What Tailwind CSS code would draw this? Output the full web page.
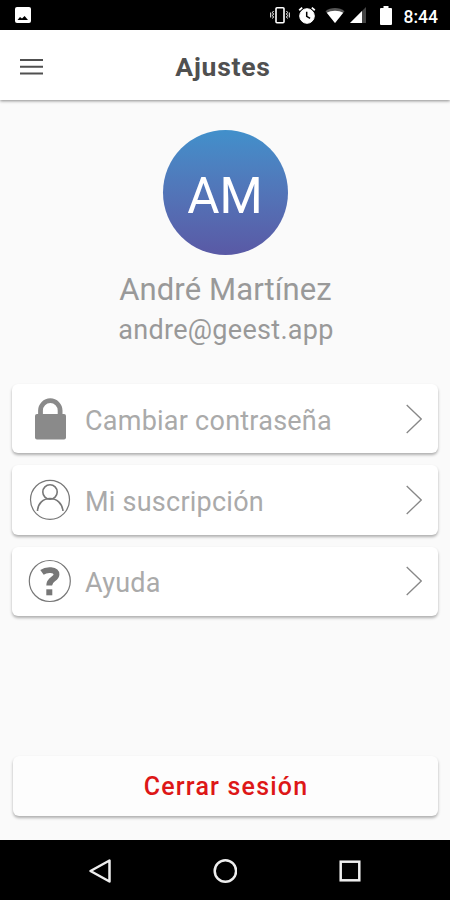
<!DOCTYPE html>
<html lang="es">
<head>
    <meta charset="UTF-8">
    <meta name="viewport" content="width=device-width, initial-scale=1.0">
    <title>Ajustes</title>
    <script src="https://cdn.jsdelivr.net/npm/@tailwindcss/browser@4"></script>
</head>
<body class="flex flex-col h-[900px] w-[450px] overflow-hidden bg-[#fafafa] font-[Roboto,sans-serif]">

    <!-- Status bar -->
    <div class="flex h-[30px] shrink-0 items-center justify-between bg-black pl-[14px] pr-[12px] text-white">
        <svg class="h-[18px] w-[18px]" viewBox="0 0 18 18">
            <rect x="1" y="1" width="16" height="16" rx="2" fill="#fff"/>
            <path d="M3.5 14l2.500-3 2 1.500 2.600-2.500 3.400 4z" fill="#000"/>
        </svg>
        <div class="flex items-center">
            <svg class="h-5 w-5" viewBox="0 0 20 20" fill="none" stroke="#fff">
                <rect x="6" y="2.7" width="8" height="15" rx="1" stroke-width="1.6"/>
                <path d="M3.5 6l-1 1.5 1 1.5-1 1.5 1 1.5-1 1.5M.7 7.5v5M16.5 6l1 1.5-1 1.5 1 1.5-1 1.5 1 1.5M19.3 7.5v5" stroke-width="1"/>
            </svg>
            <svg class="ml-2 h-[18px] w-[18px]" viewBox="0 0 18 18" fill="none" stroke="#fff">
                <circle cx="9" cy="10" r="7.3" fill="#fff" stroke-width="1"/>
                <path d="M1.2 4.2l3-2.6M16.8 4.2l-3-2.6" stroke-width="1.8"/>
                <path d="M8.7 5.7v4.7l3.4 2" stroke="#000" stroke-width="1.5"/>
            </svg>
            <svg class="ml-[9px] h-4 w-5" viewBox="0 0 20 16">
                <path d="M10 16L.5 4.2C5-.2 15-.2 19.500 4.200z" fill="#555"/>
                <path d="M10 16L1.800 5.800c4-2.800 12.400-2.800 16.400 0z" fill="#fff"/>
            </svg>
            <svg class="ml-[5px] h-4 w-4" viewBox="0 0 16 16">
                <path d="M0 16L16 0v16z" fill="#444"/>
                <path d="M0 16L12 4v12z" fill="#fff"/>
            </svg>
            <svg class="ml-[14px] h-[19px] w-3" viewBox="0 0 12 19" fill="#fff">
                <path d="M3.500 0h5v2H11a1 1 0 0 1 1 1v15a1 1 0 0 1-1 1H1a1 1 0 0 1-1-1V3a1 1 0 0 1 1-1h2.500z"/>
            </svg>
            <span class="ml-3 pt-[3px] text-[17.500px] leading-5 font-medium">8:44</span>
        </div>
    </div>

    <!-- App bar -->
    <header class="grid h-[70px] shrink-0 grid-cols-[1fr_auto_1fr] items-center bg-white px-5 pt-[3px] shadow-[0_1px_3px_rgba(0,0,0,0.45)]">
        <svg class="h-[18px] w-[23px]" viewBox="0 0 23 18" stroke="#505050" stroke-width="2">
            <path d="M0 2h23M0 8.700h23M0 15.400h23"/>
        </svg>
        <h1 class="pr-1 text-[26.500px] leading-8 font-bold tracking-[0.750px] text-[#505050]">Ajustes</h1>
    </header>

    <!-- Profile -->
    <section class="flex flex-col items-center pt-[30px] text-[#999999]">
        <div class="flex h-[125px] w-[125px] items-center justify-center rounded-full bg-linear-to-b from-[#4190cb] to-[#5959a5] pt-[7px] text-[49.500px] text-white">AM</div>
        <p class="mt-[15px] pl-px text-[31px] leading-[40px] tracking-[0.100px]">André Martínez</p>
        <p class="pl-[2px] text-[27px] leading-[40px] tracking-[0.300px]">andre@geest.app</p>
    </section>

    <!-- Options -->
    <main class="mt-[34px] flex flex-col gap-3 pl-3 pr-[12px] text-[27px] tracking-[0.240px] text-[#aaaaaa]">
        <a href="#" class="flex h-[69.300px] items-center rounded-md bg-white pl-4 pr-4 shadow-[0_2px_3px_rgba(0,0,0,0.3)]">
            <svg class="h-11 w-11" viewBox="0 0 44 44">
                <path d="M12.500 20v-6.500a9.800 9.800 0 0 1 19.600 0V20" fill="none" stroke="#8a8a8a" stroke-width="4.800"/>
                <rect x="7" y="17" width="31" height="25.500" rx="2" fill="#8a8a8a"/>
            </svg>
            <span class="ml-[13px] pt-[5px]">Cambiar contraseña</span>
            <svg class="ml-auto h-[30px] w-4" viewBox="0 0 16 30" fill="none" stroke="#888" stroke-width="1.300"><path d="M.7 1l14.500 14L.7 29"/></svg>
        </a>
        <a href="#" class="flex h-[69.300px] items-center rounded-md bg-white pl-4 pr-4 shadow-[0_2px_3px_rgba(0,0,0,0.3)]">
            <svg class="h-11 w-11" viewBox="0 0 44 44" fill="none" stroke="#777">
                <circle cx="22" cy="21.800" r="19.500" stroke-width="1.200"/>
                <circle cx="22" cy="14" r="7.200" stroke-width="1.600"/>
                <path d="M9.500 33c.3-7.800 5.800-12.500 12.500-12.500S34.200 25.200 35 33" stroke-width="1.600"/>
            </svg>
            <span class="ml-[13px] pt-[5px]">Mi suscripción</span>
            <svg class="ml-auto h-[30px] w-4" viewBox="0 0 16 30" fill="none" stroke="#888" stroke-width="1.300"><path d="M.7 1l14.500 14L.7 29"/></svg>
        </a>
        <a href="#" class="flex h-[69.300px] items-center rounded-md bg-white pl-4 pr-4 shadow-[0_2px_3px_rgba(0,0,0,0.3)]">
            <svg class="h-11 w-11" viewBox="0 0 44 44" fill="none" stroke="#777">
                <circle cx="21.800" cy="22" r="20.500" stroke-width="1.200"/>
                <path d="M14 13.300c4.500-3.300 14.500-3.300 14.500 2.200 0 4.800-7.300 4.200-7.300 11" stroke-width="5.800"/>
                <path d="M18.300 30.300h6v6h-6z" fill="#777" stroke="none"/>
            </svg>
            <span class="ml-[13px] pt-[5px]">Ayuda</span>
            <svg class="ml-auto h-[30px] w-4" viewBox="0 0 16 30" fill="none" stroke="#888" stroke-width="1.300"><path d="M.7 1l14.500 14L.7 29"/></svg>
        </a>
    </main>

    <!-- Logout -->
    <div class="mt-auto px-[12.500px] pb-6">
        <button class="h-[60px] w-full rounded-md bg-[#fdfdfd] pt-px pl-[2px] text-[25px] font-medium tracking-[1.200px] text-[#dd1717] shadow-[0_2px_3px_rgba(0,0,0,0.3)]">Cerrar sesión</button>
    </div>

    <!-- Navigation bar -->
    <nav class="flex h-[60px] shrink-0 items-center justify-center gap-[101px] bg-black pt-px">
        <svg class="h-6 w-6" viewBox="0 0 24 24" fill="none" stroke="#eee" stroke-width="2.500"><path d="M21.500 1.500v21L2.500 12z" stroke-linejoin="round"/></svg>
        <svg class="h-6 w-6" viewBox="0 0 24 24" fill="none" stroke="#eee" stroke-width="2.500"><circle cx="12.400" cy="12" r="10.700"/></svg>
        <svg class="h-6 w-6" viewBox="0 0 24 24" fill="none" stroke="#eee" stroke-width="2.500"><rect x="2.700" y="2.700" width="18.600" height="18.600"/></svg>
    </nav>

</body>
</html>
